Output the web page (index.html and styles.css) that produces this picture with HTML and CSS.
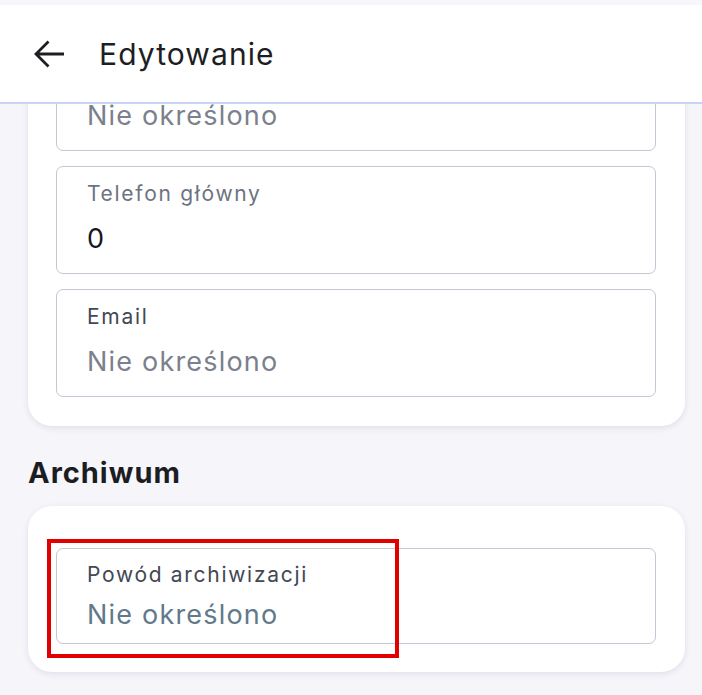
FILE: index.html
```html
<!DOCTYPE html>
<html lang="pl">
<head>
<meta charset="utf-8">
<title>Edytowanie</title>
<link rel="stylesheet" href="styles.css">
</head>
<body>
<header class="topbar">
  <svg class="back" width="32" height="32" viewBox="0 0 32 32" aria-hidden="true">
    <path d="M30 16H2.5M14.5 3.5L2 16L14.5 28.5" fill="none" stroke="#1d1e24" stroke-width="2.8"/>
  </svg>
  <h1 class="title">Edytowanie</h1>
</header>
<main class="content">
  <section class="card card-contact">
    <div class="field">
      <div class="label label-muted label-empty"></div>
      <div class="value placeholder">Nie określono</div>
    </div>
    <div class="field">
      <div class="label label-muted">Telefon główny</div>
      <div class="value">0</div>
    </div>
    <div class="field">
      <div class="label">Email</div>
      <div class="value placeholder">Nie określono</div>
    </div>
  </section>
  <h2 class="section-title">Archiwum</h2>
  <section class="card card-archive">
    <div class="field field-compact">
      <div class="label">Powód archiwizacji</div>
      <div class="value placeholder-blue">Nie określono</div>
    </div>
    <div class="highlight"></div>
  </section>
</main>
</body>
</html>
```
FILE: styles.css
```css
* { box-sizing: border-box; }
html, body { margin: 0; padding: 0; }
body {
  background: #f6f5fa;
  font-family: Inter, "Noto Sans", sans-serif;
  color: #1d1e24;
  width: 702px;
  height: 695px;
  overflow: hidden;
}
.topbar {
  position: fixed;
  top: 0; left: 0; right: 0;
  height: 104px;
  background: #ffffff;
  border-top: 5px solid #f7f6fb;
  border-bottom: 2px solid #c6d4f6;
  display: flex;
  align-items: center;
  padding-left: 34px;
  z-index: 10;
}
.back { display: block; flex: none; }
.title {
  margin: 0 0 0 33px;
  font-size: 30px;
  font-weight: 400;
  color: #1d1e24;
  letter-spacing: 1.1px;
}
.content {
  padding: 15px 17px 0 28px;
}
.card {
  position: relative;
  background: #ffffff;
  border-radius: 24px;
  box-shadow: 0 2px 6px rgba(40, 40, 80, 0.10);
  padding: 28px 29px 29px 28px;
  display: flex;
  flex-direction: column;
  gap: 15px;
}
.field {
  border: 1px solid #c4c7d4;
  border-radius: 7px;
  padding: 15px 30px 18px;
  display: flex;
  flex-direction: column;
  gap: 17px;
}
.label {
  font-size: 21px;
  line-height: 24px;
  color: #424854;
  letter-spacing: 1.7px;
}
.label-empty { height: 24px; }
.label-muted { color: #6e7380; }
.value {
  font-size: 27px;
  line-height: 32px;
  color: #16171c;
  letter-spacing: 1.2px;
}
.placeholder { color: #7b808c; }
.placeholder-blue { color: #62798a; }
.section-title {
  margin: 30px 0 17px;
  font-size: 29px;
  line-height: 33px;
  font-weight: 700;
  color: #1c1d22;
  letter-spacing: 1px;
}
.card-archive {
  padding-top: 42px;
  padding-bottom: 28px;
}
.field-compact {
  padding-top: 14px;
  padding-bottom: 12px;
  gap: 12px;
}
.highlight {
  position: absolute;
  left: 19px;
  top: 33px;
  width: 352px;
  height: 119px;
  border: 4px solid #e10000;
}
```
